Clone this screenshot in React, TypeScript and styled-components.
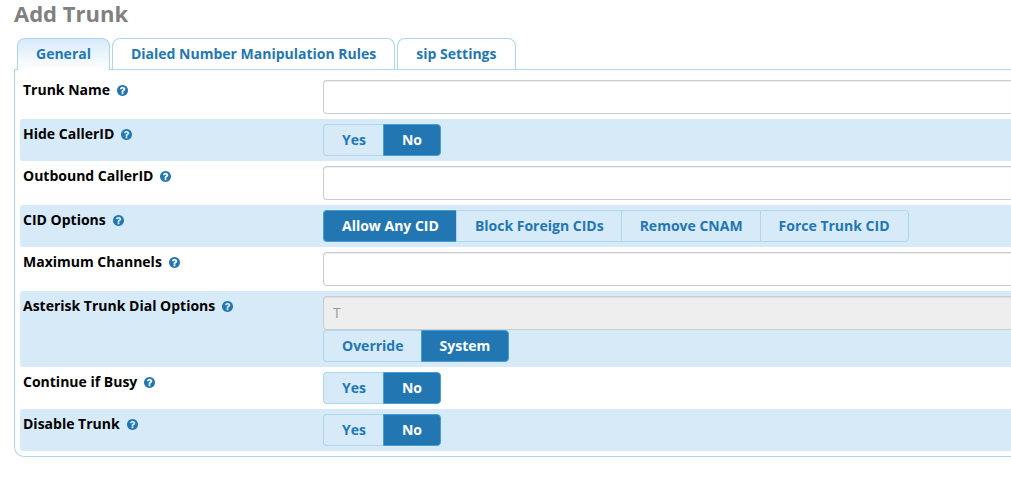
import { useState } from "react";
import styled, { createGlobalStyle } from "styled-components";

const blue = "#2277b3";
const pale = "#d7eaf8";
const line = "#aed6ef";

const GlobalStyle = createGlobalStyle`
  *, *::before, *::after { box-sizing: border-box; }
  body {
    margin: 0;
    background: #fff;
    color: #000;
    font: 14px/20px "Open Sans", "Liberation Sans", sans-serif;
  }
`;

const Page = styled.main`
  padding: 0 0 20px 14px;
`;

const Title = styled.h1`
  margin: 0 0 12px;
  color: #808080;
  font-size: 22px;
  line-height: 26px;
  font-weight: 700;
`;

const TabList = styled.div`
  display: flex;
  gap: 2px;
  padding-left: 3px;
`;

const Tab = styled.button<{ $active: boolean }>`
  height: ${(p) => (p.$active ? 32 : 31)}px;
  margin: 0 0 ${(p) => (p.$active ? -1 : 0)}px;
  padding: 0 18px ${(p) => (p.$active ? 1 : 0)}px;
  position: relative;
  border: 1px solid ${line};
  border-bottom: 0;
  border-radius: 8px 8px 0 0;
  background: ${(p) => (p.$active ? `linear-gradient(${pale}, #fff)` : "#fff")};
  color: ${blue};
  font: inherit;
  font-weight: 700;
  line-height: 30px;
  cursor: pointer;
`;

const Panel = styled.form`
  padding: 5px 0 5px 5px;
  border: 1px solid ${line};
  border-right: 0;
  border-bottom-left-radius: 10px;
`;

const Row = styled.div`
  display: grid;
  grid-template-columns: 300px minmax(0, 1fr);
  padding: 5px 0 5px 3px;
  border-radius: 3px 0 0 3px;

  &:nth-child(even) {
    background: ${pale};
  }
`;

const LabelCell = styled.div`
  display: flex;
  align-items: center;
  gap: 7px;
  height: 20px;
  font-weight: 700;
`;

const HelpIcon = styled.svg`
  width: 11px;
  height: 11px;
  fill: ${blue};
`;

const Controls = styled.div`
  display: flex;
  flex-direction: column;
  align-items: flex-start;
`;

const TextInput = styled.input`
  width: 100%;
  height: 34px;
  padding: 5px 9px 7px;
  border: 1px solid #ccc;
  border-right: 0;
  border-radius: 4px 0 0 4px;
  background: #fff;
  box-shadow: inset 0 1px 1px rgba(0, 0, 0, 0.075);
  color: #555;
  font: inherit;

  &:disabled {
    background: #eee;
    color: #999;
  }
`;

const Segments = styled.div`
  display: flex;
`;

const Segment = styled.label`
  height: 32px;
  padding: 0 17px 0 18px;
  border: 1px solid ${line};
  border-right-width: 0;
  background: ${pale};
  color: ${blue};
  font-weight: 700;
  line-height: 30px;
  cursor: pointer;

  &:first-child {
    border-radius: 4px 0 0 4px;
  }

  &:last-child {
    padding-right: 18px;
    border-right-width: 1px;
    border-radius: 0 4px 4px 0;
  }

  &:has(input:checked) {
    border-color: #459fd6;
    background: ${blue};
    color: #fff;
  }

  &:has(input:focus-visible) {
    outline: 2px solid #459fd6;
  }
`;

const HiddenRadio = styled.input`
  position: absolute;
  width: 1px;
  height: 1px;
  margin: 0;
  opacity: 0;
  appearance: none;
`;

function Help() {
  return (
    <HelpIcon viewBox="128 128 1536 1536" aria-hidden="true">
      <path d="M1024 1376v-192q0-14-9-23t-23-9h-192q-14 0-23 9t-9 23v192q0 14 9 23t23 9h192q14 0 23-9t9-23zm256-672q0-88-55.5-163t-138.5-116-170-41q-243 0-371 213-15 24 8 42l132 100q7 6 19 6 16 0 25-12 53-68 86-92 34-24 86-24 48 0 85.5 26t37.5 59q0 38-20 61t-68 45q-63 28-115.5 86.5t-52.5 125.5v36q0 14 9 23t23 9h192q14 0 23-9t9-23q0-19 21.5-49.5t54.5-49.5q32-18 49-28.5t46-35 44.5-48 28-60.5 12.5-81zm384 192q0 209-103 385.5t-279.5 279.5-385.5 103-385.5-103-279.5-279.5-103-385.5 103-385.5 279.5-279.5 385.5-103 385.5 103 279.5 279.5 103 385.5z" />
    </HelpIcon>
  );
}

type Field = {
  id: string;
  label: string;
  text?: boolean;
  disabled?: boolean;
  value?: string;
  options?: string[];
  selected?: string;
};

const fields: Field[] = [
  { id: "trunk_name", label: "Trunk Name", text: true },
  { id: "hcid", label: "Hide CallerID", options: ["Yes", "No"], selected: "No" },
  { id: "outcid", label: "Outbound CallerID", text: true },
  {
    id: "keepcid",
    label: "CID Options",
    options: ["Allow Any CID", "Block Foreign CIDs", "Remove CNAM", "Force Trunk CID"],
    selected: "Allow Any CID",
  },
  { id: "maxchans", label: "Maximum Channels", text: true },
  {
    id: "dialopts",
    label: "Asterisk Trunk Dial Options",
    text: true,
    disabled: true,
    value: "T",
    options: ["Override", "System"],
    selected: "System",
  },
  { id: "continue", label: "Continue if Busy", options: ["Yes", "No"], selected: "No" },
  { id: "disabletrunk", label: "Disable Trunk", options: ["Yes", "No"], selected: "No" },
];

const tabs = ["General", "Dialed Number Manipulation Rules", "sip Settings"];

function FieldRow({ field }: { field: Field }) {
  const labelId = `${field.id}_label`;
  return (
    <Row>
      <LabelCell>
        {field.text ? (
          <label id={labelId} htmlFor={field.id}>{field.label}</label>
        ) : (
          <span id={labelId}>{field.label}</span>
        )}
        <Help />
      </LabelCell>
      <Controls>
        {field.text && (
          <TextInput type="text" id={field.id} defaultValue={field.value} disabled={field.disabled} />
        )}
        {field.options && (
          <Segments role="radiogroup" aria-labelledby={labelId}>
            {field.options.map((option) => (
              <Segment key={option}>
                <HiddenRadio
                  type="radio"
                  name={`${field.id}_choice`}
                  value={option}
                  defaultChecked={option === field.selected}
                />
                {option}
              </Segment>
            ))}
          </Segments>
        )}
      </Controls>
    </Row>
  );
}

export default function App() {
  const [active, setActive] = useState(0);
  return (
    <>
      <GlobalStyle />
      <Page>
        <Title>Add Trunk</Title>
        <TabList role="tablist">
          {tabs.map((name, i) => (
            <Tab
              key={name}
              type="button"
              role="tab"
              aria-selected={i === active}
              $active={i === active}
              onClick={() => setActive(i)}
            >
              {name}
            </Tab>
          ))}
        </TabList>
        <Panel>
          {fields.map((field) => (
            <FieldRow key={field.id} field={field} />
          ))}
        </Panel>
      </Page>
    </>
  );
}
